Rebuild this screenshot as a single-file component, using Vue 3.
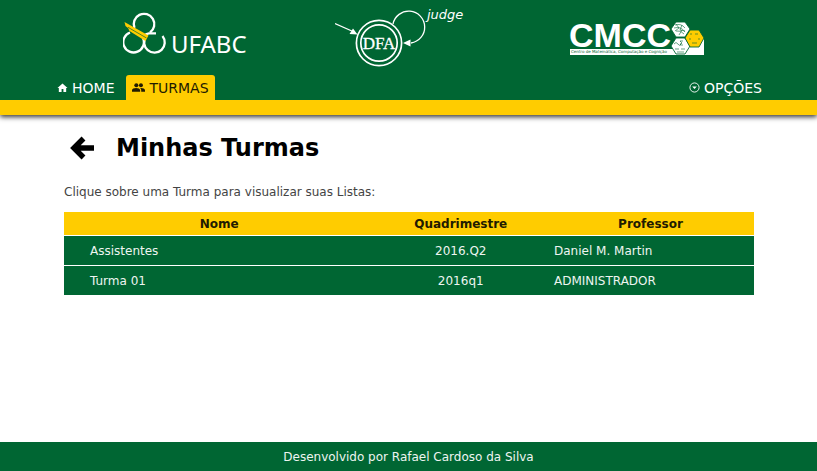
<script setup>
import { ref } from 'vue'

const turmas = ref([
  { nome: 'Assistentes', quadrimestre: '2016.Q2', professor: 'Daniel M. Martin' },
  { nome: 'Turma 01', quadrimestre: '2016q1', professor: 'ADMINISTRADOR' },
])
</script>

<template>
  <div class="page">
    <header class="top">
      <div class="logos">
        <svg class="logo" width="126" height="72" viewBox="0 0 126 72" role="img" aria-label="UFABC">
          <g fill="none" stroke="#fff" stroke-width="2.3">
            <path d="M11.500 28 A10.300 10.300 0 1 1 27 32.500" />
            <path d="M7 32.500 A10.300 10.300 0 1 0 20 38 Q21 34 26 33.300 H33" />
            <path d="M23 36.500 A10.300 10.300 0 1 0 39.500 36" />
          </g>
          <path d="M1.500 22 L25.500 35.500 L22.500 41 L6.500 31 L5 28 L2.500 26 Z" fill="#fc0" />
          <path d="M5 27.300 L23.500 38" stroke="#063" stroke-width="0.7" />
          <text class="ufabc" x="48" y="53">UFABC</text>
        </svg>
        <svg class="logo" width="130" height="72" viewBox="0 0 130 72" role="img" aria-label="DFA judge">
          <g fill="none" stroke="#fff">
            <circle cx="44" cy="43" r="22.600" stroke-width="1.700" />
            <circle cx="44" cy="43" r="18.200" stroke-width="1.700" />
            <path d="M0 23.500 L18 31.500" stroke-width="1.300" />
            <path d="M58 24 A16 16 0 1 1 76 43" stroke-width="1.300" />
          </g>
          <path d="M22.500 34.500 L14.500 34 L18 28.500 Z M68 43 L75.500 39.500 V46.500 Z" fill="#fff" />
          <text class="dfa" x="44" y="49" text-anchor="middle">DFA</text>
          <text class="judge" x="92" y="19">judge</text>
        </svg>
        <svg class="logo" width="137" height="72" viewBox="0 0 137 72" role="img" aria-label="CMCC">
          <path d="M1 49 H106 L135 39 V55 H1 Z" fill="#fff" />
          <text class="cmcc" x="0" y="47">CMCC</text>
          <text class="cmcc-sub" x="2" y="53">Centro de Matemática, Computação e Cognição</text>
          <g stroke="#063" stroke-width="0.900">
            <path d="M107 22 L116 22 L121 29 L116 37 L107 37 L102 29 Z" fill="#fff" />
            <path d="M107 38 L116 38 L121 46 L116 54 L107 54 L102 46 Z" fill="#fff" />
            <path d="M121 30 L130 30 L135 38 L130 47 L121 47 L116 38 Z" fill="#fc0" />
          </g>
          <g fill="none" stroke="#063" stroke-width="0.600">
            <path d="M106 25 q6 -2 10 3 M105 28 q7 -2 11 4 M107 31 q5 -1 8 3 M107 24 l3 4 -4 3 M113 25 l-2 5 5 1 M110 35 l3 -5" />
            <path d="M105 44 q2 -3 4 0 t3 -1 M114 41 h-3 l2 2 -2 2 h3 M106 49 h4 M112 49 h4 M108 52 h7" />
            <path d="M121 34 h2 M126 34 h3 M120 39 h2 M129 39 h2 M123 43 h5" />
          </g>
        </svg>
      </div>
      <nav class="menu">
        <a class="tab" href="#home">
          <svg class="icon small" viewBox="0 0 24 24" fill="currentColor" aria-hidden="true"><path d="M12 3 L1 13 H4 V22 H10 V15 H14 V22 H20 V13 H23 Z" /></svg>
          HOME
        </a>
        <a class="tab active" href="#turmas" aria-current="page">
          <svg class="icon" viewBox="0 0 24 24" fill="currentColor" aria-hidden="true"><circle cx="8" cy="8" r="3.700" /><circle cx="16.500" cy="8" r="3.700" /><path d="M0 20 V17 C0 11.700 15 11.700 15 17 V20 Z M17 20 V17 Q17 14.500 15 13 C19 12.500 24 14 24 17 V20 Z" /></svg>
          TURMAS
        </a>
        <button class="tab options" type="button">
          <svg class="icon small" viewBox="0 0 24 24" aria-hidden="true"><circle cx="12" cy="12" r="10" fill="none" stroke="currentColor" stroke-width="2" /><path d="M7 10 H17 L12 15 Z" fill="currentColor" /></svg>
          OPÇÕES
        </button>
      </nav>
    </header>

    <main class="content">
      <div class="heading">
        <a class="back" href="#home" aria-label="Voltar">
          <svg width="24" height="24" viewBox="0 0 24 24" aria-hidden="true"><path d="M24 12 H4 M13.500 2.500 L4 12 L13.500 21.500" fill="none" stroke="#000" stroke-width="5.500" /></svg>
        </a>
        <h1>Minhas Turmas</h1>
      </div>
      <p class="hint">Clique sobre uma Turma para visualizar suas Listas:</p>
      <table class="list">
        <thead>
          <tr>
            <th class="c-name">Nome</th>
            <th class="c-term">Quadrimestre</th>
            <th class="c-prof">Professor</th>
          </tr>
        </thead>
        <tbody>
          <tr v-for="turma in turmas" :key="turma.nome">
            <td class="name">{{ turma.nome }}</td>
            <td class="term">{{ turma.quadrimestre }}</td>
            <td>{{ turma.professor }}</td>
          </tr>
        </tbody>
      </table>
    </main>

    <footer class="foot">Desenvolvido por Rafael Cardoso da Silva</footer>
  </div>
</template>

<style>
body {
  margin: 0;
  background: #fff;
}
</style>

<style scoped>
.page {
  display: flex;
  flex-direction: column;
  min-height: 100vh;
  font-family: Verdana, "DejaVu Sans", sans-serif;
  font-size: 12px;
}
.top {
  background: #063;
  border-bottom: 15px solid #fc0;
  box-shadow: 0 2px 5px rgba(0, 0, 0, 0.8);
}
.logos {
  display: grid;
  grid-template-columns: 212fr 234fr 248fr;
  padding-left: 15%;
}
.logo {
  display: block;
}
.ufabc {
  font: 24px "Noto Sans", sans-serif;
  fill: #fff;
}
.dfa {
  font: 17px "Liberation Serif", serif;
  fill: #fff;
  stroke: #fff;
  stroke-width: 0.3;
}
.judge {
  font: italic 13px "DejaVu Sans", sans-serif;
  fill: #fff;
}
.cmcc {
  font: bold 34px "Liberation Sans", sans-serif;
  fill: #fff;
}
.cmcc-sub {
  font: 4px "DejaVu Sans", sans-serif;
  fill: #063;
}
.menu {
  display: flex;
  gap: 4px;
  padding: 3px 47px 0 49px;
}
.tab {
  display: flex;
  align-items: center;
  gap: 4px;
  height: 25px;
  padding: 0 8px;
  border: 0;
  border-radius: 3px 3px 0 0;
  background: none;
  color: #fff;
  font-family: inherit;
  font-size: 14px;
  line-height: 16px;
  text-decoration: none;
}
.tab.active {
  padding: 0 6px;
  background: #fc0;
  color: #221b00;
}
.options {
  margin-left: auto;
}
.icon {
  width: 13px;
  height: 13px;
}
.icon.small {
  width: 11px;
  height: 11px;
}
.content {
  flex: 1;
  padding: 16px 63px 0 64px;
}
.heading {
  display: flex;
  align-items: center;
  gap: 22px;
  padding-left: 6px;
}
.back {
  display: flex;
}
h1 {
  margin: 0;
  font-size: 24px;
  line-height: 34px;
  color: #000;
}
.hint {
  margin: 19px 0 12px;
  line-height: 16px;
  color: #444;
}
.list {
  width: 100%;
  border-collapse: collapse;
  table-layout: fixed;
}
.c-name {
  width: 45%;
}
.c-term {
  width: 25%;
}
.c-prof {
  width: 30%;
}
th {
  height: 23px;
  padding: 0;
  background: #fc0;
  color: #221b00;
}
td {
  height: 29px;
  padding: 0 7px;
  border-top: 1px solid #fff;
  background: #063;
  color: #eef5f1;
}
td.name {
  padding-left: 26px;
}
td.term {
  text-align: center;
}
.foot {
  padding: 8px 0 6px;
  background: #063;
  color: #eef5f1;
  line-height: 15px;
  text-align: center;
}
</style>
